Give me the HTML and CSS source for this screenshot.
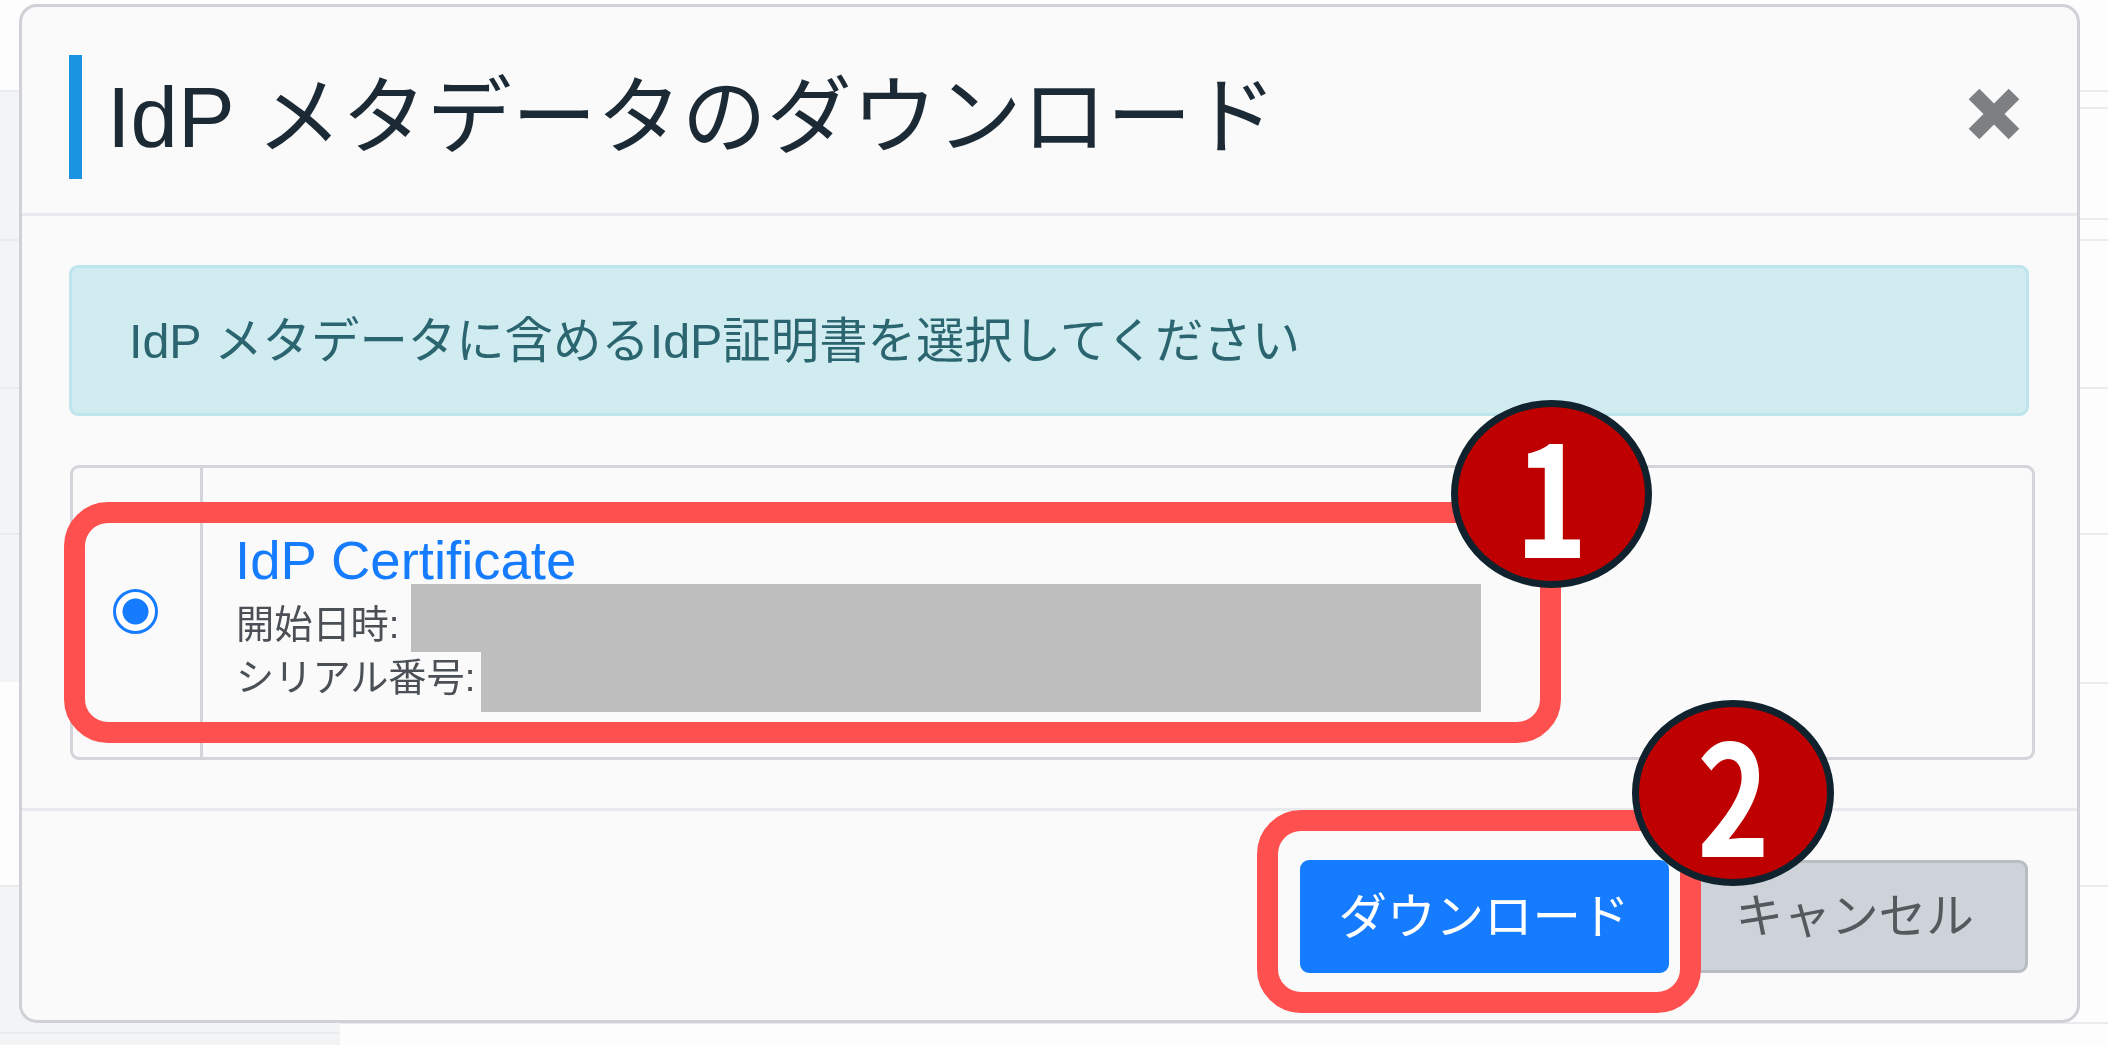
FILE: index.html
```html
<!DOCTYPE html>
<html lang="ja">
<head>
<meta charset="utf-8">
<title>IdP メタデータのダウンロード</title>
<link rel="stylesheet" href="styles.css">
</head>
<body>
<div class="backdrop" aria-hidden="true">
  <div class="side">
    <div class="band"></div>
    <div class="band gray"></div>
    <div class="band gray"></div>
    <div class="band gray"></div>
    <div class="band gray"></div>
    <div class="band"></div>
    <div class="band gray"></div>
    <div class="band gray"></div>
  </div>
  <div class="main">
    <div class="band"></div>
    <div class="band"></div>
    <div class="band"></div>
    <div class="band"></div>
    <div class="band"></div>
    <div class="band"></div>
    <div class="band"></div>
    <div class="band"></div>
    <div class="band"></div>
    <div class="band"></div>
  </div>
</div>

<section class="modal">
  <header class="modal-header">
    <h1 class="modal-title">IdP メタデータのダウンロード</h1>
    <svg class="close" viewBox="0 0 52 54" aria-label="閉じる"><path d="M6 7 L46 47 M46 7 L6 47"/></svg>
  </header>
  <div class="modal-body">
    <div class="alert">IdP メタデータに含めるIdP証明書を選択してください</div>
    <div class="cert-table">
      <div class="cert-radio"><span class="radio"></span></div>
      <div class="cert-info">
        <div class="cert-name">IdP Certificate</div>
        <div class="cert-line">開始日時:</div>
        <div class="cert-line">シリアル番号:</div>
      </div>
    </div>
  </div>
  <footer class="modal-footer">
    <button class="btn primary">ダウンロード</button>
    <button class="btn secondary">キャンセル</button>
  </footer>
</section>

<div class="mask mask-a"></div>
<div class="mask mask-b"></div>
<div class="frame frame-a"></div>
<div class="frame frame-b"></div>
<div class="badge badge-a"><span class="digit">1</span></div>
<div class="badge badge-b"><span class="digit">2</span></div>
</body>
</html>
```

FILE: styles.css
```css
* { box-sizing: border-box; }

html, body {
  margin: 0;
  width: 2108px;
  height: 1045px;
  overflow: hidden;
  background: #fdfdfd;
  font-family: "Liberation Sans", "Noto Sans CJK JP", sans-serif;
}

/* Page dimmed behind the dialog */
.backdrop {
  display: flex;
  height: 1045px;
  filter: blur(0.7px);
}
.side {
  width: 340px;
  display: grid;
  grid-template-rows: 90px 149px 148px 146px 149px 203px 147px 13px;
}
.main {
  flex: 1;
  display: grid;
  grid-template-rows: 90px 17px 111px 21px 148px 146px 149px 203px 137px 10px 13px;
}
.band { border-top: 2px solid #e9ebef; }
.band:first-child { border-top: 0; }
.gray { background: #f3f4f6; }
.side .band:nth-child(6) { border-top: 0; }

/* Dialog */
.modal {
  position: absolute;
  left: 19px;
  top: 4px;
  width: 2061px;
  height: 1019px;
  display: flex;
  flex-direction: column;
  background: #fafafa;
  border: 3px solid #cfd1d6;
  border-radius: 18px;
  filter: blur(0.7px);
}
.modal-header {
  height: 209px;
  padding: 48px 48px 34px 47px;
  display: flex;
  justify-content: space-between;
  align-items: flex-start;
  border-bottom: 3px solid #e8e9ec;
}
.modal-title {
  margin: 0;
  height: 124px;
  padding-left: 25px;
  border-left: 13px solid #1a94e0;
  font-size: 85px;
  font-weight: 400;
  line-height: 126px;
  color: #1c2a36;
  white-space: nowrap;
}
.close {
  width: 52px;
  height: 54px;
  margin: 32px 9px 0 0;
  fill: none;
  stroke: #7d8083;
  stroke-width: 15;
}

.modal-body {
  flex: 1;
  padding: 49px 48px 0 47px;
}
.alert {
  height: 151px;
  padding: 37px 57px 35px;
  border: 3px solid #bee5eb;
  border-radius: 9px;
  background: #d1ecf1;
  color: #2a6570;
  font-size: 48.4px;
  line-height: 72px;
  white-space: nowrap;
}
.cert-table {
  display: flex;
  height: 295px;
  margin: 49px -6px 0 1px;
  border: 3px solid #d3d5da;
  border-radius: 9px;
}
.cert-radio {
  width: 130px;
  flex: none;
  display: flex;
  align-items: center;
  justify-content: center;
  padding: 0 2px 2px 0;
  border-right: 3px solid #d3d5da;
}
.radio {
  width: 45px;
  height: 45px;
  border: 3px solid #167cff;
  border-radius: 50%;
  background: radial-gradient(circle, #167cff 0 12.5px, #fff 13.5px);
}
.cert-info {
  padding: 56px 0 0 32px;
}
.cert-name {
  font-size: 54.5px;
  line-height: 74px;
  color: #167cff;
}
.cert-line {
  font-size: 38.2px;
  line-height: 53px;
  margin-left: 1px;
  color: #4b5056;
}

.modal-footer {
  height: 212px;
  padding: 49px 49px 0 0;
  display: flex;
  justify-content: flex-end;
  gap: 15px;
  border-top: 3px solid #e8e9ec;
}
.btn {
  height: 113px;
  padding: 0 36px;
  border: 3px solid transparent;
  border-radius: 9px;
  font: 400 48.5px/72px "Liberation Sans", "Noto Sans CJK JP", sans-serif;
  white-space: nowrap;
}
.primary { background: #167cff; border-color: #167cff; color: #fff; }
.secondary { padding: 0 51px 0 49px; font-size: 47.7px; background: #ced2d9; border-color: #b9bdc3; color: #54595e; }

/* Redaction blocks and annotations laid over the screenshot */
.mask { position: absolute; background: #bebebe; }
.mask-a { left: 411px; top: 584px; width: 1070px; height: 68px; }
.mask-b { left: 481px; top: 652px; width: 1000px; height: 60px; }

.frame {
  position: absolute;
  border: 21px solid #ff5050;
  border-radius: 44px;
}
.frame-a { left: 64px; top: 502px; width: 1497px; height: 241px; }
.frame-b { left: 1257px; top: 810px; width: 444px; height: 203px; }

.badge {
  position: absolute;
  display: flex;
  align-items: center;
  justify-content: center;
  border: 7px solid #10222e;
  border-radius: 50%;
  background: #bf0000;
  color: #fff;
  font: 700 154px/1 "Noto Sans CJK JP", sans-serif;
}
.digit {
  display: inline-block;
  margin-top: -6px;
  transform: scaleX(0.8);
}
.badge-a { left: 1451px; top: 400px; width: 201px; height: 188px; }
.badge-b { left: 1632px; top: 700px; width: 202px; height: 186px; }
```
